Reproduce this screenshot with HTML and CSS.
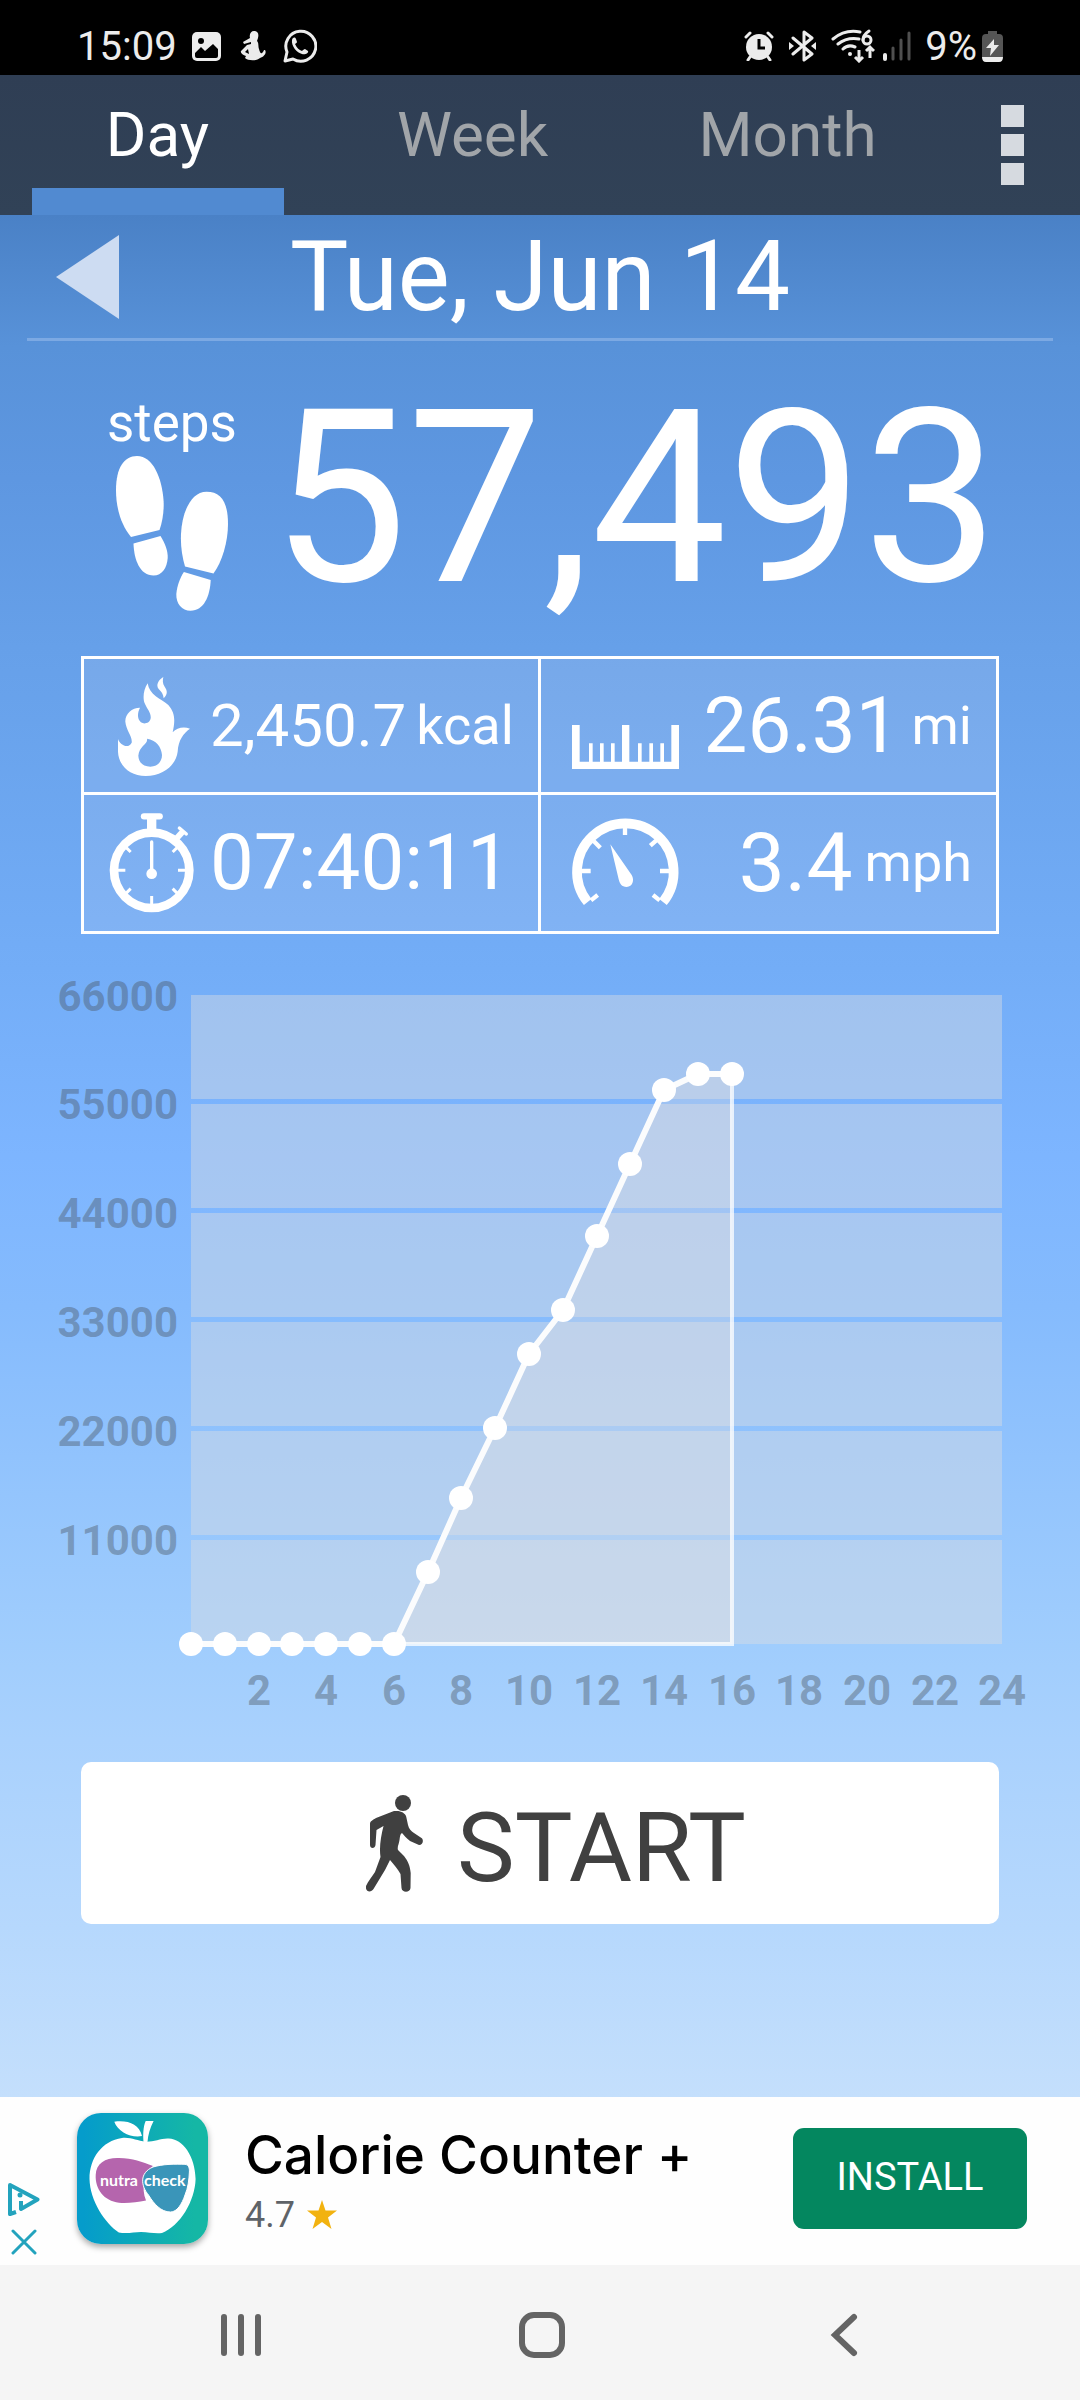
FILE: index.html
```html
<!DOCTYPE html>
<html lang="en">
<head>
<meta charset="utf-8">
<meta name="viewport" content="width=device-width, initial-scale=1">
<title>Pedometer</title>
<link rel="stylesheet" href="styles.css">
</head>
<body>
<div class="statusbar">
  <span class="statusbar-time">15:09</span>
  <svg width="29" height="29" viewBox="0 0 29 29" aria-hidden="true">
    <rect width="29" height="29" rx="5" fill="#ececec"/>
    <path d="M3 21 L9 15 L13 19 L21 12 L26 17 V24 Q26 26 24 26 H5 Q3 26 3 24Z" fill="#000"/>
    <circle cx="9" cy="9" r="3" fill="#000"/>
  </svg>
  <svg class="icon-figure" width="26" height="30" viewBox="0 0 26 30" fill="#ececec" aria-hidden="true">
    <path d="M14 0 C18 0 19 3 18 7 L17 10 C19 12 18 15 19 18 C20 22 21 23 22 22 C24 21 23 19 25 19 C27 22 24 26 20 27 C17 30 8 30 5 27 L6 25 C3 24 0 22 1 20 L7 14 L11 13 L11 11 L4 13 L3 11 L10 7 C9 3 11 0 14 0Z"/>
    <path d="M5 21 L8 18 L9 23Z" fill="#000"/>
  </svg>
  <svg class="icon-chat" width="34" height="34" viewBox="0 0 34 34" aria-hidden="true">
    <path d="M2 32 L4 23 A15 15 0 1 1 10 30 Z" fill="none" stroke="#ececec" stroke-width="3" stroke-linejoin="round"/>
    <path d="M9 11 C10 8 12 8 13 10 L14 13 C14 14 13 14 12 15 C14 19 16 21 19 22 C20 21 21 20 22 20 L25 22 C26 24 22 26 19 25 C14 24 8 17 9 11Z" fill="#ececec"/>
  </svg>
  <span class="spacer"></span>
  <svg width="30" height="30" viewBox="0 0 30 30" fill="none" stroke="#ececec" aria-hidden="true">
    <circle cx="15" cy="16" r="13" fill="#ececec" stroke="none"/>
    <path d="M2 6 L6 2 M28 6 L24 2 M6 26 L4 29 M24 26 L26 29" stroke-width="3" stroke-linecap="round"/>
    <path d="M15 8 V17 H21" stroke="#000" stroke-width="3"/>
  </svg>
  <svg class="icon-bluetooth" width="27" height="32" viewBox="0 0 27 32" fill="none" stroke="#ececec" stroke-width="3" stroke-linejoin="round" stroke-linecap="round" aria-hidden="true">
    <path d="M4 8 L23 24 L15 30 V2 L23 8 L4 24"/>
    <path d="M0 12 L5 16 L0 20Z M27 12 L22 16 L27 20Z" fill="#ececec" stroke="none"/>
  </svg>
  <svg class="icon-wifi" width="44" height="34" viewBox="0 0 44 34" fill="none" stroke="#ececec" stroke-width="3" stroke-linecap="round" aria-hidden="true">
    <path d="M2 10 Q14 0 29 3 M7 15 Q16 8 28 10 M12 20 Q17 15 24 18"/>
    <circle cx="19" cy="25" r="2" fill="#ececec" stroke="none"/>
    <path d="M38 2 Q32 6 32 11"/>
    <circle cx="36" cy="11" r="4"/>
    <path d="M28 21 V31 M24 28 L28 32 L32 28 M39 29 V19 M35 22 L39 18 L43 22" stroke-linecap="butt"/>
  </svg>
  <svg width="28" height="30" viewBox="0 0 28 30" stroke="#505050" stroke-width="3" stroke-linecap="round" aria-hidden="true">
    <path d="M2 24 V28" stroke="#ececec" stroke-width="4"/><path d="M10 17 V28 M18 9 V28 M26 2 V28"/>
  </svg>
  <span class="statusbar-battery">9%</span>
  <svg width="21" height="32" viewBox="0 0 21 32" aria-hidden="true">
    <path d="M6 4 V1 H15 V4 H17 Q21 4 21 8 V27 H0 V8 Q0 4 4 4Z" fill="#555"/>
    <path d="M0 27 H21 Q21 32 17 32 H4 Q0 32 0 27Z" fill="#ececec"/>
    <path d="M12 9 L4 18 H9 L8 26 L17 15 H12Z" fill="#ececec"/>
  </svg>
</div>

<header class="tabbar">
  <nav class="tabs">
    <button class="tab tab-active" type="button">Day</button>
    <button class="tab" type="button">Week</button>
    <button class="tab" type="button">Month</button>
  </nav>
  <button class="menu" type="button" aria-label="Menu"><i></i><i></i><i></i></button>
</header>

<main class="main">
  <div class="date-row">
    <button class="prev" type="button" aria-label="Previous day">
      <svg width="63" height="84" viewBox="0 0 63 84" aria-hidden="true"><path d="M0 42 L63 0 V84Z" fill="#cddcf2"/></svg>
    </button>
    <h1 class="date">Tue, Jun 14</h1>
  </div>

  <section class="steps">
    <div class="steps-side">
      <span class="steps-label">steps</span>
      <svg width="112" height="155" viewBox="0 0 112 155" fill="#fff" aria-hidden="true">
        <path d="M21 0 C8 0 0 12 0 34 C0 54 6 70 15 81 L43.500 74 C47 64 48 54 47.600 45 C46 22 37 0 21 0Z"/>
        <path d="M17.500 87.500 L44.500 80 C49 87 52 95 51.700 102 C51 112 46 119.500 37.500 119.500 C24 119.500 18 104 17.500 87.500Z"/>
        <path d="M90.600 35.700 C105 35.700 112 46 112 68 C112 86 106 106 97.500 117.500 L69 110.500 C66 100 64.500 90 65 78 C66 56 75 35.700 90.600 35.700Z"/>
        <path d="M67.900 116 L94.700 124 C94 140 88 154.700 74.400 154.700 C66 154.700 60 148 60.300 138 C61 130 64 122 67.900 116Z"/>
      </svg>
    </div>
    <span class="steps-count">57,493</span>
  </section>

  <section class="stats">
    <div class="stat">
      <svg class="stat-icon" viewBox="144 108 270 300" fill="#fff" aria-hidden="true">
        <path fill-rule="evenodd" d="M263 130 C250 150 248 175 254 190 C262 208 274 220 272 235 C270 247 260 251 250 250 C232 245 230 222 240 203 C215 203 195 222 196 245 C198 270 218 290 215 308 C205 328 180 315 174 297 V335 C176 378 210 408 257 408 C310 408 348 375 353 335 C355 300 370 280 390 266 C370 258 350 264 338 277 C345 245 347 220 325 195 C300 175 268 165 263 130Z M261 296 C265 312 237 318 235 347 C236 368 250 380 271 380 C292 380 306 365 306 345 C304 320 288 300 261 296Z"/>
        <path d="M310 111 C295 120 287 135 296 147 C304 155 310 162 311 175 C324 162 322 151 314 140 C307 130 308 120 310 111Z"/>
      </svg>
      <span class="stat-value value-small">2,450.7</span>
      <span class="stat-unit">kcal</span>
    </div>
    <div class="stat stat-right">
      <svg class="stat-icon icon-wide" viewBox="72 108 360 300" fill="#fff" aria-hidden="true">
        <path d="M93 255 H116 V365 H144 V310 H155 V365 H177 V310 H188 V365 H210 V310 H221 V365 H243 V255 H265 V365 H291 V310 H302 V365 H325 V310 H336 V365 H358 V310 H369 V365 H391 V255 H414 V387 H93Z"/>
      </svg>
      <span class="stat-value">26.31</span>
      <span class="stat-unit">mi</span>
    </div>
    <div class="stat">
      <svg class="stat-icon" viewBox="144 524 270 300" fill="none" stroke="#fff" aria-hidden="true">
        <circle cx="275" cy="696" r="113" stroke-width="26"/>
        <path d="M252 534 H299" stroke-width="19" stroke-linecap="round"/>
        <path d="M275 540 V580" stroke-width="28"/>
        <path d="M348 602 L370 578" stroke-width="18"/>
        <path d="M358 569 L379 587" stroke-width="10" stroke-linecap="round"/>
        <path d="M172 696 H196 M354 696 H378 M275 773 V800 M198 627 L212 641 M352 627 L338 641 M198 765 L212 751 M352 765 L338 751" stroke-width="9"/>
        <path d="M275 611 V700" stroke-width="10" stroke-linecap="round"/>
        <circle cx="275" cy="706" r="16" fill="#fff" stroke="none"/>
      </svg>
      <span class="stat-value">07:40:11</span>
    </div>
    <div class="stat stat-right">
      <svg class="stat-icon icon-wide" viewBox="72 526 360 300" fill="none" stroke="#fff" aria-hidden="true">
        <path d="M140 793 A145 145 0 1 1 366 793" stroke-width="29"/>
        <path d="M150 788 L170 772 M120 700 H149 M158 610 L178 630 M252 560 V592 M352 603 L328 624 M386 700 H357 M356 788 L336 772" stroke-width="13"/>
        <path d="M208 620 L272 712 C281 728 275 747 257 748 C242 748 236 738 233 725Z" fill="#fff" stroke="none"/>
      </svg>
      <span class="stat-value value-large">3.4</span>
      <span class="stat-unit">mph</span>
    </div>
  </section>

  <svg class="chart" viewBox="0 0 1080 760" role="img" aria-label="Steps by hour">
    <g class="chart-bands">
      <rect x="191" y="35" width="811" height="104"/>
      <rect x="191" y="144" width="811" height="104"/>
      <rect x="191" y="253" width="811" height="104"/>
      <rect x="191" y="362" width="811" height="104"/>
      <rect x="191" y="471" width="811" height="104"/>
      <rect x="191" y="580" width="811" height="104"/>
    </g>
    <path class="chart-area" d="M394 684 L428 612 L461 538 L495 468 L529 394 L563 350 L597 276 L630 204 L664 130 L698 114 H732 V684Z"/>
    <path class="chart-edge" d="M394 684 H732 V114"/>
    <polyline class="chart-line" points="191,684 394,684 428,612 461,538 495,468 529,394 563,350 597,276 630,204 664,130 698,114 732,114"/>
    <g class="chart-dots">
      <circle cx="191" cy="684" r="12"/><circle cx="225" cy="684" r="12"/><circle cx="259" cy="684" r="12"/>
      <circle cx="292" cy="684" r="12"/><circle cx="326" cy="684" r="12"/><circle cx="360" cy="684" r="12"/>
      <circle cx="394" cy="684" r="12"/><circle cx="428" cy="612" r="12"/><circle cx="461" cy="538" r="12"/>
      <circle cx="495" cy="468" r="12"/><circle cx="529" cy="394" r="12"/><circle cx="563" cy="350" r="12"/>
      <circle cx="597" cy="276" r="12"/><circle cx="630" cy="204" r="12"/><circle cx="664" cy="130" r="12"/>
      <circle cx="698" cy="114" r="12"/><circle cx="732" cy="114" r="12"/>
    </g>
    <g class="chart-text" text-anchor="end">
      <text x="178" y="51">66000</text><text x="178" y="159">55000</text><text x="178" y="268">44000</text>
      <text x="178" y="377">33000</text><text x="178" y="486">22000</text><text x="178" y="595">11000</text>
    </g>
    <g class="chart-text" text-anchor="middle">
      <text x="259" y="745">2</text><text x="326" y="745">4</text><text x="394" y="745">6</text>
      <text x="461" y="745">8</text><text x="529" y="745">10</text><text x="597" y="745">12</text>
      <text x="664" y="745">14</text><text x="732" y="745">16</text><text x="799" y="745">18</text>
      <text x="867" y="745">20</text><text x="935" y="745">22</text><text x="1002" y="745">24</text>
    </g>
  </svg>

  <button class="start" type="button">
    <svg width="57" height="97" viewBox="0 0 57 97" fill="#404040" aria-hidden="true">
      <circle cx="37" cy="8" r="8"/>
      <path d="M28 16 L32.500 16 C37 17 40 19 40.500 23 L42 30 C43 34 45 36 48 38 L55.500 43 C58 45 57 50 53 50 L44 46 C40 43 38 40 36 38 C34 39 34 42 33.500 45 C33 49 31 52 32 55 L38 61 C42 66 44 71 44.700 78 L44.500 93 C44 98 36 98 35.500 93 L34.500 79 C32 74 28 70 24 65 L19 75 L7.500 94 C5 98 -1 97 0 91 C2 86 6 82 9 77 L14.500 62 C13 52 15 41 17.500 31 L10.500 35 L9.500 50 C9 54 4 54 4 50 L4 29 C4 26 7 25 10 23Z"/>
    </svg>
    <span class="start-label">START</span>
  </button>
</main>

<aside class="ad">
  <div class="ad-choices">
    <svg width="32" height="33" viewBox="0 0 32 33" fill="none" stroke="#23a3bd" aria-hidden="true">
      <path d="M8 29 L2 31 V2 L29.500 16.500 L13 26 V18" stroke-width="4" stroke-linejoin="round"/>
      <circle cx="12" cy="12" r="2.500" fill="#23a3bd" stroke="none"/>
    </svg>
    <svg width="32" height="26" viewBox="0 0 32 26" fill="none" stroke="#23a3bd" stroke-width="3" stroke-linecap="round" aria-hidden="true"><path d="M5 2 L27 24 M27 2 L5 24"/></svg>
  </div>
  <svg class="ad-logo" width="131" height="131" viewBox="0 0 131 131" aria-hidden="true">
    <defs><linearGradient id="teal"><stop offset="0.050" stop-color="#059ccb"/><stop offset="0.900" stop-color="#15b7a5"/></linearGradient></defs>
    <rect width="131" height="131" fill="url(#teal)"/>
    <path d="M68.700 8 H76.600 C73 15 71 22 70.500 29 H66.500 C66 22 66 14 68.700 8Z M37.300 8.700 C51 7 62 11 65 23 C54 25 41 19 37.300 8.700Z" fill="#fff"/>
    <path d="M68.700 28.700 C60 28 54 24 45 25 C25 28 12.500 45 12.500 66 C13 88 28 110 41.800 119.500 C50 121 57 119 64 119 C72 119 78 121 85 120 C103 113 118 88 118.600 66 C118 43 106 26 91.700 25.500 C84 25 77 29 68.700 28.700Z" fill="#fff"/>
    <path d="M41.800 45 C56 45 65 49 76 53 C67 60 64 75 69 87.500 C60 89 51 90.500 42 89.700 C27 88 18 76 18.700 62 C19 50 29 44.500 41.800 45Z" fill="#b565ad"/>
    <path d="M76 54 C86 51 98 51 108 51.300 C112 52 112.500 55 112.400 59 C112 67 111 75 108 82 C105 91 100 99 93.500 99 C84 99 77 91 71.500 82 C64 73 62 60 76 54Z" fill="#3a95b9" stroke="#fff"/>
    <text class="ad-logo-text" x="23" y="73">nutra</text>
    <text class="ad-logo-text" x="67" y="73">check</text>
  </svg>
  <div class="ad-copy">
    <a class="ad-title" href="#">Calorie Counter +</a>
    <span class="ad-rating">4.7
      <svg width="30" height="29" viewBox="0 0 30 29" aria-hidden="true"><path d="M15 0 L18.500 10.500 H30 L21 17.500 L24.500 29 L15 22 L5.500 29 L9 17.500 L0 10.500 H11.500Z" fill="#f2b20f"/></svg>
    </span>
  </div>
  <button class="install" type="button">INSTALL</button>
</aside>

<nav class="navbar">
  <button type="button" aria-label="Recent apps"><svg width="46" height="46" viewBox="0 0 46 46"><path d="M6 5 V41 M23 5 V41 M40 5 V41"/></svg></button>
  <button type="button" aria-label="Home"><svg width="46" height="46" viewBox="0 0 46 46"><rect x="3" y="3" width="40" height="40" rx="12"/></svg></button>
  <button type="button" aria-label="Back"><svg width="46" height="46" viewBox="0 0 46 46"><path d="M34 5 L15 23 L34 41"/></svg></button>
</nav>
</body>
</html>
```

FILE: styles.css
```css
* { box-sizing: border-box; }

body {
  margin: 0;
  min-height: 100vh;
  display: flex;
  flex-direction: column;
  font-family: Roboto, "Liberation Sans", sans-serif;
  color: #fff;
}

button {
  margin: 0;
  padding: 0;
  border: 0;
  background: none;
  color: inherit;
  font: inherit;
}

svg { display: block; flex: none; }

/* Phone status bar */
.statusbar {
  height: 75px;
  padding: 17px 77px 0;
  display: flex;
  align-items: center;
  gap: 8px;
  background: #000;
  color: #ececec;
  font-size: 40px;
}
.statusbar-time { margin-right: 7px; }
.statusbar-battery { margin-left: 6px; margin-right: -3px; }
.icon-figure { margin-left: 11px; }
.icon-chat { margin-left: 9px; }
.icon-bluetooth, .icon-wifi { margin-left: 7px; }
.spacer { flex: 1; }

/* Tabs */
.tabbar {
  height: 140px;
  display: flex;
  background: linear-gradient(#2f3e54, #314257);
}
.tabs { flex: 7; display: flex; }
.tab {
  flex: 1;
  display: flex;
  flex-direction: column;
  align-items: center;
  color: #a1a5a9;
  font-size: 62px;
  line-height: 107px;
  padding-top: 6px;
}
.tab::after { content: ""; width: 80%; flex: 1; }
.tab-active { color: #fff; }
.tab-active::after { background: #518ad1; }
.menu {
  flex: 1;
  display: flex;
  flex-direction: column;
  align-items: center;
  justify-content: center;
  gap: 7px;
}
.menu i { width: 23px; height: 22px; background: #d6dae0; }

/* Day overview */
.main {
  flex: 1;
  display: flex;
  flex-direction: column;
  background: linear-gradient(#4a81c6, #5892d9 7%, #5e97e1 14%, #66a0e9 23%, #73adf7 40%, #7db5ff 50%, #85bbfd 58%, #a0cdfd 76%, #a9d1fd 81%, #b6d8fd 91%, #c4dffc);
}
.date-row {
  height: 126px;
  margin: 0 27px;
  padding: 0 29px;
  display: grid;
  grid-template-columns: 63px 1fr 63px;
  align-items: center;
  border-bottom: 3px solid #7ca9e3;
}
.date {
  margin: 0;
  text-align: center;
  font-size: 98px;
  font-weight: 400;
  line-height: 120px;
}

.steps {
  margin-top: 32px;
  padding: 0 81px 0 107px;
  display: flex;
  justify-content: space-between;
}
.steps-side {
  padding-top: 20px;
  display: flex;
  flex-direction: column;
  align-items: center;
  gap: 3px;
}
.steps-label { font-size: 53px; line-height: 60px; }
.steps-count { font-size: 242px; line-height: 250px; }

.stats {
  margin: 33px 81px 0;
  display: grid;
  grid-template-columns: 456fr 459fr;
  grid-template-rows: 136px 139px;
  border: solid #fff;
  border-width: 3px 0 0 3px;
}
.stat {
  padding: 0 24px;
  display: flex;
  align-items: center;
  gap: 12px;
  border: solid #fff;
  border-width: 0 3px 3px 0;
  background: rgba(238, 229, 236, 0.12);
  background-clip: padding-box;
}
.stat-icon { width: 90px; height: 100px; }
.icon-wide { width: 120px; }
.stat-right .icon-wide { margin-right: auto; }
.stat-value { font-size: 78px; line-height: 92px; }
.value-small { font-size: 60px; }
.value-large { font-size: 82px; }
.stat-unit { font-size: 54px; line-height: 64px; }
.value-small + .stat-unit { margin-left: -2px; }

/* Hourly chart */
.chart { width: 100%; height: auto; margin-top: 26px; }
.chart-bands { fill: rgba(218, 220, 225, 0.44); }
.chart-area { fill: rgba(239, 229, 222, 0.3); }
.chart-edge { fill: none; stroke: rgba(255, 255, 255, 0.75); stroke-width: 4px; }
.chart-line { fill: none; stroke: #fbfcfd; stroke-width: 6px; stroke-linejoin: round; }
.chart-dots { fill: #fff; }
.chart-text { fill: rgba(74, 85, 97, 0.42); font-size: 42px; font-weight: 700; }

.start {
  height: 162px;
  margin: 42px 81px 0;
  padding-left: 32px;
  display: flex;
  align-items: center;
  justify-content: center;
  gap: 34px;
  border-radius: 10px;
  background: #fff;
  color: #404040;
  font-size: 97px;
  line-height: 114px;
}
.start-label { padding-top: 10px; }

/* Ad banner */
.ad {
  height: 168px;
  padding: 0 53px 5px 8px;
  display: flex;
  align-items: center;
  background: #fefefe;
}
.ad-choices {
  align-self: flex-end;
  padding-bottom: 5px;
  display: flex;
  flex-direction: column;
  gap: 13px;
}
.ad-logo {
  margin-left: 37px;
  border-radius: 24px;
  box-shadow: 0 3px 6px rgba(0, 0, 0, 0.35);
}
.ad-logo-text { fill: #fff; font-family: Lato, sans-serif; font-size: 16px; font-weight: 700; }
.ad-copy {
  flex: 1;
  padding-top: 4px;
  margin-left: 37px;
  display: flex;
  flex-direction: column;
  gap: 8px;
}
.ad-title {
  color: #000;
  text-decoration: none;
  font-family: Inter, sans-serif;
  font-size: 53px;
  font-weight: 500;
  line-height: 60px;
  white-space: nowrap;
}
.ad-rating {
  display: flex;
  align-items: center;
  gap: 12px;
  color: #5f6368;
  font-size: 36px;
  line-height: 44px;
}
.install {
  width: 234px;
  height: 101px;
  padding-bottom: 4px;
  border-radius: 11px;
  background: #04875f;
  font-size: 38px;
}

/* System navigation */
.navbar {
  height: 135px;
  padding: 4px 86px 0 90px;
  display: grid;
  grid-template-columns: 1fr 1fr 1fr;
  place-items: center;
  background: #f5f5f5;
}
.navbar svg { fill: none; stroke: #646464; stroke-width: 6px; stroke-linecap: round; }
```
